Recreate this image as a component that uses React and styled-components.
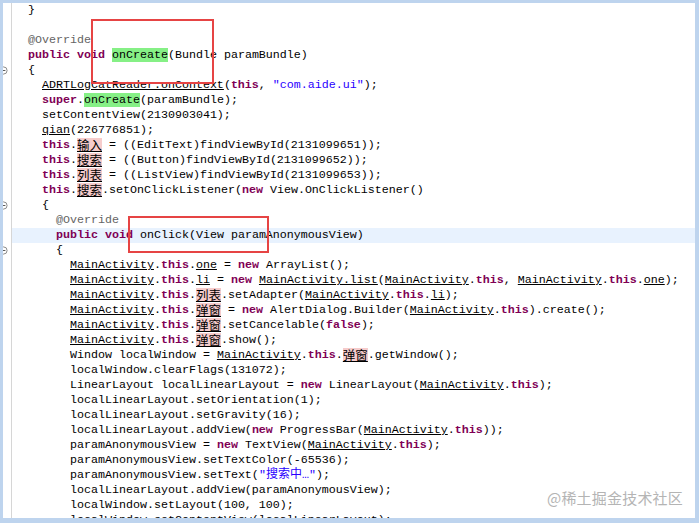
import React from "react";
import styled, { createGlobalStyle } from "styled-components";

const Global = createGlobalStyle`
  html, body { margin: 0; padding: 0; background: #bed4ee; }
  #root { width: 699px; height: 523px; }
`;

const Frame = styled.div`
  position: relative;
  width: 699px;
  height: 523px;
  box-sizing: border-box;
  padding: 3px 4px 5px 3px;
  background: #bed4ee;
`;

const Panel = styled.div`
  height: 100%;
  background: #ffffff;
  overflow: hidden;
  display: flex;
  flex-direction: column;
`;

const Row = styled.div`
  display: flex;
  height: 15px;
  flex: none;
`;

const Gutter = styled.div`
  width: 8px;
  flex: none;
  border-right: 1px solid #d6d6d6;
  display: flex;
  align-items: center;
`;

const Code = styled.div`
  flex: 1;
  height: 15px;
  padding-left: ${(p) => 16 + p.$indent * 14}px;
  background: ${(p) => (p.$current ? "#e8f2fe" : "transparent")};
  font-family: "Liberation Mono", "Noto Sans CJK SC", monospace;
  font-size: 11.67px;
  line-height: 15px;
  color: #000;
  white-space: pre;
`;

const Kw = styled.span`
  color: #7f0055;
  font-weight: bold;
`;
const Ann = styled.span`
  color: #646464;
`;
const Str = styled.span`
  color: #2a00ff;
`;
const U = styled.span`
  text-decoration: underline;
  text-underline-offset: 1px;
`;
const Hl = styled.span`
  background: #86f086;
`;
const Field = styled.span`
  display: inline-block;
  vertical-align: top;
  height: 14px;
  line-height: 14px;
  background: #f6cccc;
  text-decoration: underline;
  text-underline-offset: 1px;
  font-family: "Noto Sans CJK SC", sans-serif;
  font-size: 12.5px;
`;
const Cjk = styled.span`
  font-family: "Noto Sans CJK SC", sans-serif;
  font-size: 12px;
  line-height: 8px;
`;

const Marker = styled.svg`
  margin-left: -4px;
  flex: none;
`;

const Box = styled.div`
  position: absolute;
  box-sizing: border-box;
  border: 2px solid #e64444;
  pointer-events: none;
`;

const Watermark = styled.div`
  position: absolute;
  right: 16px;
  bottom: 15px;
  font-family: "Noto Sans CJK SC", sans-serif;
  font-size: 15px;
  color: #b4b4b4;
  letter-spacing: 0.2px;
`;

const lines = [
  [0, "}"],
  [0, ""],
  [0, "[a:@Override]"],
  [0, "[k:public] [k:void] [h:onCreate](Bundle paramBundle)"],
  [0, "{", { fold: true }],
  [1, '[u:ADRTLogCatReader.onContext]([k:this], [s:"com.aide.ui"]);'],
  [1, "[k:super].[h:onCreate](paramBundle);"],
  [1, "setContentView(2130903041);"],
  [1, "[u:qian](226776851);"],
  [1, "[k:this].[f:输入] = ((EditText)findViewById(2131099651));"],
  [1, "[k:this].[f:搜索] = ((Button)findViewById(2131099652));"],
  [1, "[k:this].[f:列表] = ((ListView)findViewById(2131099653));"],
  [1, "[k:this].[f:搜索].setOnClickListener([k:new] View.OnClickListener()"],
  [1, "{", { fold: true }],
  [2, "[a:@Override]"],
  [2, "[k:public] [k:void] onClick(View paramAnonymousView)", { current: true }],
  [2, "{", { fold: true }],
  [3, "[u:MainActivity].[k:this].[u:one] = [k:new] ArrayList();"],
  [3, "[u:MainActivity].[k:this].[u:li] = [k:new] [u:MainActivity.list]([u:MainActivity].[k:this], [u:MainActivity].[k:this].[u:one]);"],
  [3, "[u:MainActivity].[k:this].[f:列表].setAdapter([u:MainActivity].[k:this].[u:li]);"],
  [3, "[u:MainActivity].[k:this].[f:弹窗] = [k:new] AlertDialog.Builder([u:MainActivity].[k:this]).create();"],
  [3, "[u:MainActivity].[k:this].[f:弹窗].setCancelable([k:false]);"],
  [3, "[u:MainActivity].[k:this].[f:弹窗].show();"],
  [3, "Window localWindow = [u:MainActivity].[k:this].[f:弹窗].getWindow();"],
  [3, "localWindow.clearFlags(131072);"],
  [3, "LinearLayout localLinearLayout = [k:new] LinearLayout([u:MainActivity].[k:this]);"],
  [3, "localLinearLayout.setOrientation(1);"],
  [3, "localLinearLayout.setGravity(16);"],
  [3, "localLinearLayout.addView([k:new] ProgressBar([u:MainActivity].[k:this]));"],
  [3, "paramAnonymousView = [k:new] TextView([u:MainActivity].[k:this]);"],
  [3, "paramAnonymousView.setTextColor(-65536);"],
  [3, 'paramAnonymousView.setText([s:"][c:搜索中][s:…"]);'],
  [3, "localLinearLayout.addView(paramAnonymousView);"],
  [3, "localWindow.setLayout(100, 100);"],
  [3, "localWindow.setContentView(localLinearLayout);"],
];

const kinds = { k: Kw, a: Ann, u: U, h: Hl, f: Field };

function renderLine(src) {
  const out = [];
  const re = /\[(\w):([^\]]*)\]/g;
  let last = 0;
  let m;
  let i = 0;
  while ((m = re.exec(src))) {
    if (m.index > last) out.push(src.slice(last, m.index));
    const [, t, txt] = m;
    if (t === "s") out.push(<Str key={i++}>{txt}</Str>);
    else if (t === "c")
      out.push(
        <Str key={i++}>
          <Cjk>{txt}</Cjk>
        </Str>
      );
    else {
      const C = kinds[t];
      out.push(<C key={i++}>{txt}</C>);
    }
    last = re.lastIndex;
  }
  if (last < src.length) out.push(src.slice(last));
  return out;
}

const FoldIcon = () => (
  <Marker width="9" height="9" viewBox="0 0 9 9">
    <circle cx="4.5" cy="4.5" r="3.6" fill="#fff" stroke="#8a8a8a" strokeWidth="1" />
    <line x1="2.6" y1="4.5" x2="6.4" y2="4.5" stroke="#5a5a5a" strokeWidth="1" />
  </Marker>
);

export default function App() {
  return (
    <>
      <Global />
      <Frame>
        <Panel>
          {lines.map(([indent, src, opts = {}], idx) => (
            <Row key={idx}>
              <Gutter>{opts.fold ? <FoldIcon /> : null}</Gutter>
              <Code $indent={indent} $current={opts.current}>
                {renderLine(src)}
              </Code>
            </Row>
          ))}
        </Panel>
        <Box style={{ left: 91, top: 19, width: 123, height: 65 }} />
        <Box style={{ left: 128, top: 216, width: 141, height: 37 }} />
        <Watermark>@稀土掘金技术社区</Watermark>
      </Frame>
    </>
  );
}
